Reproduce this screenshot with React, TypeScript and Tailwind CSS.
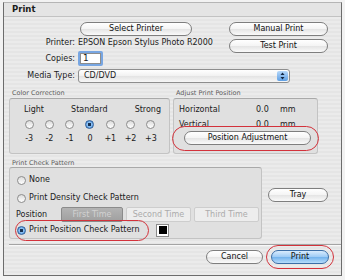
import React from 'react';

type BtnProps = { label: string; className?: string; primary?: boolean };

const Btn = ({ label, className = '', primary = false }: BtnProps) => {
  const look = primary
    ? 'border-[#3c6ea6] bg-[linear-gradient(#d9ecfd,#9ccbf6_50%,#72b2ec_51%,#b6dcfb)]'
    : 'border-[#7e7e7e] bg-[linear-gradient(#ffffff,#f4f4f4_50%,#e4e4e4_51%,#fafafa)]';
  return (
    <div
      className={`flex items-center justify-center h-[14px] rounded-full border text-[8px] leading-none text-[#111] ${look} ${className}`}
    >
      {label}
    </div>
  );
};

const Radio = ({ on = false }: { on?: boolean }) =>
  on ? (
    <span className="inline-block shrink-0 w-[9px] h-[9px] rounded-full border border-[#2f5f99] bg-[radial-gradient(circle,#18304f_0,#18304f_1.4px,#8cc0f2_2px,#3d84d4_100%)]" />
  ) : (
    <span className="inline-block shrink-0 w-[9px] h-[9px] rounded-full border border-[#8c8c8c] bg-[linear-gradient(#dcdcdc,#ffffff)]" />
  );

const GroupLabel = ({ children }: { children: React.ReactNode }) => (
  <div className="h-[8px] leading-[8px] pl-[3px] text-[6.5px] text-[#5c5c5c]">{children}</div>
);

const Ring = ({ className }: { className: string }) => (
  <div className={`absolute rounded-full border border-[#d3323b] pointer-events-none ${className}`} />
);

const levels = ['-3', '-2', '-1', '0', '+1', '+2', '+3'];

const App = () => {
  return (
    <div className="w-[345px] h-[280px] bg-[#f2f2f2] pt-[2px] pl-[3px] font-['DejaVu_Sans',sans-serif] text-[8px] text-[#1b1b1b]">
      <div className="w-[339px] h-[274px] flex flex-col border border-[#6c6c6c] border-t-[#b5b5b5] bg-[repeating-linear-gradient(0deg,#ebebeb_0px,#ebebeb_2px,#e5e5e5_2px,#e5e5e5_4px)]">
        {/* title */}
        <div className="h-[14px] flex items-center pl-[8px] font-bold text-[8.5px] border-b border-[#c2c2c2] bg-[#e4e4e4]">
          Print
        </div>

        {/* printer / copies / manual + test */}
        <div className="flex mt-[5px]">
          <div className="w-[225px] flex flex-col">
            <Btn label="Select Printer" className="ml-[76px] w-[112px]" />
            <div className="flex items-center h-[11px] mt-[1px]">
              <span className="w-[71px] text-right">Printer:</span>
              <span className="ml-[3px]">EPSON Epson Stylus Photo R2000</span>
            </div>
            <div className="flex items-center mt-[3px]">
              <span className="w-[71px] text-right">Copies:</span>
              <div className="ml-[3px] w-[25px] h-[15px] rounded-[2px] border-2 border-[#78a6e2] bg-white shadow-[inset_0_0_0_1px_#8d8d8d] flex items-center pl-[3px] text-[9px]">
                1
              </div>
            </div>
          </div>
          <div className="w-[99px] flex flex-col gap-[3px]">
            <Btn label="Manual Print" />
            <Btn label="Test Print" />
          </div>
        </div>

        {/* media type */}
        <div className="flex items-center mt-[3px]">
          <span className="w-[71px] text-right">Media Type:</span>
          <div className="ml-[3px] w-[212px] h-[14px] flex items-center justify-between rounded-[3px] border border-[#8e8e8e] bg-[linear-gradient(#ffffff,#f1f1f1_50%,#e3e3e3_51%,#f7f7f7)] pl-[5px] pr-[1px]">
            <span>CD/DVD</span>
            <span className="w-[11px] h-[10px] rounded-[2px] bg-[linear-gradient(#b6d8fa,#5e9fe4)] flex items-center justify-center">
              <svg width="5" height="8" viewBox="0 0 5 8">
                <path d="M2.5 0.5 L4.5 3 L0.5 3 Z" fill="#10233f" />
                <path d="M2.5 7.5 L4.5 5 L0.5 5 Z" fill="#10233f" />
              </svg>
            </span>
          </div>
        </div>

        {/* color correction + adjust position */}
        <div className="flex mt-[6px]">
          <div className="ml-[5px] w-[161px] flex flex-col">
            <GroupLabel>Color Correction</GroupLabel>
            <div className="mt-[1px] h-[56px] rounded-[3px] border border-[#c3c3c3] border-t-[#a9a9a9] bg-[#e0e0e0] pt-[6px]">
              <div className="ml-[14px] w-[137px] h-[9px] flex justify-between items-center">
                <span>Light</span>
                <span>Standard</span>
                <span>Strong</span>
              </div>
              <div className="ml-[9px] w-[142px] grid grid-cols-7 mt-[6px]">
                {levels.map((l) => (
                  <div key={l} className="flex justify-center">
                    <Radio on={l === '0'} />
                  </div>
                ))}
              </div>
              <div className="ml-[9px] w-[142px] grid grid-cols-7 mt-[4px] h-[9px] items-center">
                {levels.map((l) => (
                  <div key={l} className="text-center">
                    {l}
                  </div>
                ))}
              </div>
            </div>
          </div>
          <div className="ml-[3px] w-[145px] flex flex-col">
            <GroupLabel>Adjust Print Position</GroupLabel>
            <div className="mt-[1px] h-[56px] rounded-[3px] border border-[#c3c3c3] border-t-[#a9a9a9] bg-[#e0e0e0] pt-[6px]">
              <div className="flex items-center h-[10px] pl-[5px]">
                <span className="w-[77px]">Horizontal</span>
                <span className="w-[24px]">0.0</span>
                <span>mm</span>
              </div>
              <div className="flex items-center h-[10px] pl-[5px] mt-[5px]">
                <span className="w-[77px]">Vertical</span>
                <span className="w-[24px]">0.0</span>
                <span>mm</span>
              </div>
              <div className="relative ml-[10px] w-[127px] mt-[1px]">
                <Ring className="left-[-12px] right-[-8px] top-[-5px] bottom-[-6px]" />
                <Btn label="Position Adjustment" />
              </div>
            </div>
          </div>
        </div>

        {/* print check pattern + tray */}
        <div className="flex mt-[5px]">
          <div className="ml-[5px] w-[253px] flex flex-col">
            <GroupLabel>Print Check Pattern</GroupLabel>
            <div className="h-[72px] rounded-[3px] border border-[#c3c3c3] border-t-[#a9a9a9] bg-[#e0e0e0] pt-[7px]">
              <div className="flex items-center h-[10px] pl-[7px] gap-[3px]">
                <Radio />
                <span>None</span>
              </div>
              <div className="flex items-center h-[10px] pl-[7px] gap-[3px] mt-[8px]">
                <Radio />
                <span>Print Density Check Pattern</span>
              </div>
              <div className="flex items-center h-[15px] pl-[6px] mt-[4px]">
                <span className="w-[45px]">Position</span>
                <div className="w-[62px] h-[15px] flex items-center justify-center rounded-[2px] border border-[#8b8b8b] bg-[linear-gradient(#b3b3b3,#a0a0a0)] text-[#d2d2d2]">
                  First Time
                </div>
                <div className="ml-[3px] w-[65px] h-[15px] flex items-center justify-center rounded-[2px] border border-[#cdcdcd] bg-[#ededed] text-[#ababab]">
                  Second Time
                </div>
                <div className="ml-[3px] w-[65px] h-[15px] flex items-center justify-center rounded-[2px] border border-[#cdcdcd] bg-[#ededed] text-[#ababab]">
                  Third Time
                </div>
              </div>
              <div className="flex items-center h-[10px] pl-[7px] mt-[3px]">
                <div className="relative w-[128px] flex items-center gap-[3px]">
                  <Ring className="left-[-2px] right-[-4px] top-[-4px] bottom-[-5px]" />
                  <Radio on />
                  <span>Print Position Check Pattern</span>
                </div>
                <div className="ml-[11px] w-[13px] h-[13px] border border-[#8a8a8a] bg-white p-[1.5px]">
                  <div className="w-full h-full bg-black" />
                </div>
              </div>
            </div>
          </div>
          <Btn label="Tray" className="ml-[6px] mt-[29px] w-[60px]" />
        </div>

        {/* separator */}
        <div className="ml-[5px] mt-[5px] border-t border-[#a4a4a4] shadow-[0_1px_0_#f8f8f8]" />

        {/* bottom buttons */}
        <div className="flex justify-end gap-[8px] pr-[12px] mt-[5px]">
          <Btn label="Cancel" className="w-[57px]" />
          <div className="relative w-[58px]">
            <Ring className="left-[-5px] right-[-5px] top-[-5px] bottom-[-5px]" />
            <Btn label="Print" primary />
          </div>
        </div>
      </div>
    </div>
  );
};

export default App;
